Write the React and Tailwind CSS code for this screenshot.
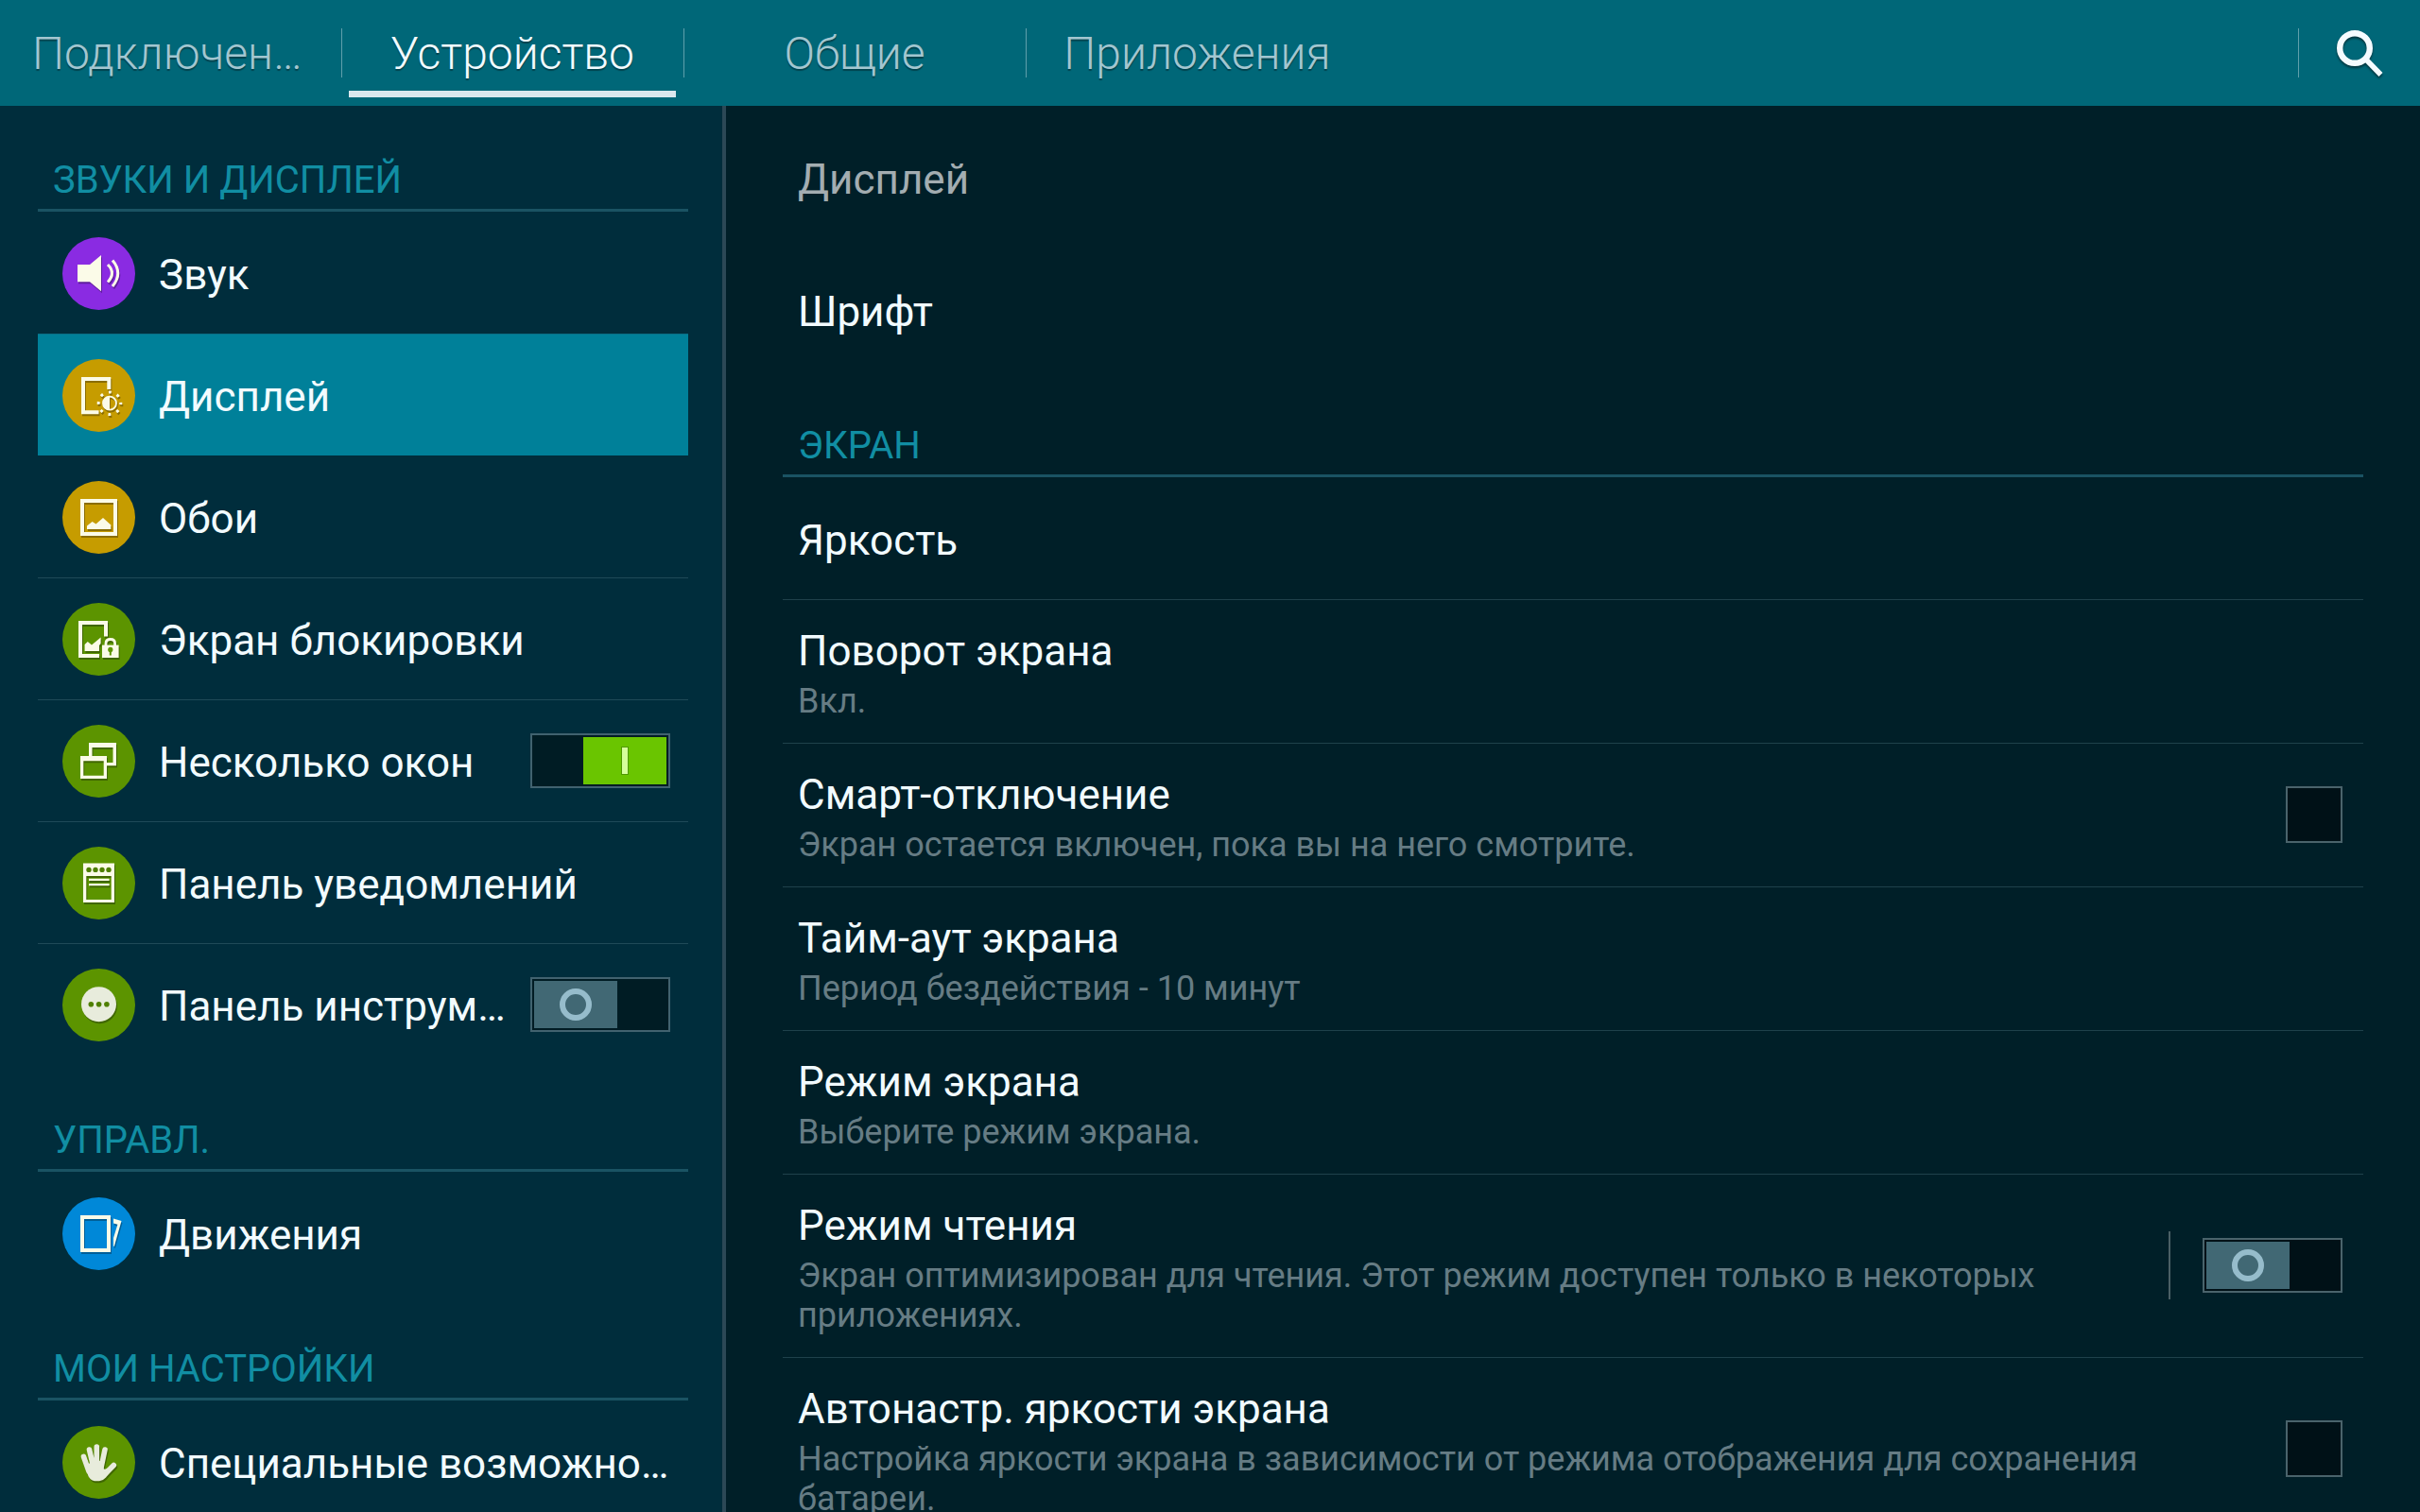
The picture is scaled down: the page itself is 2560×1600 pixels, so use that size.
import React, { useState } from 'react';

const ICONS = {
    sound: {
        color: '#8a2be2',
        glyph: (
            <>
                <path d="M16 29H29L41 19V57.3L29 47.3H16Z" fill="currentColor" />
                <path d="M48 29Q57 38 48 47.5" fill="none" stroke="currentColor" strokeWidth="3" />
                <path d="M53 24.5Q64.5 38 53 52" fill="none" stroke="currentColor" strokeWidth="3" />
            </>
        ),
    },
    display: {
        color: '#c69c00',
        glyph: (
            <>
                <path d="M49.3 32V21H22V56.3H38.5" fill="none" stroke="currentColor" strokeWidth="4" />
                <circle cx="50" cy="46.7" r="7" fill="none" stroke="currentColor" strokeWidth="1.8" />
                <path d="M50 39.7A7 7 0 0 0 50 53.7Z" fill="currentColor" />
                <circle cx="50" cy="46.7" r="11.8" fill="none" stroke="currentColor" strokeWidth="3" strokeDasharray="2.9 6.37" strokeDashoffset="1.45" />
            </>
        ),
    },
    wallpaper: {
        color: '#c69c00',
        glyph: (
            <>
                <rect x="21" y="21" width="35" height="35" fill="none" stroke="currentColor" strokeWidth="4" />
                <path d="M26 51V47.6L31.6 43L35.5 45.6L43 39L51.3 46.6V51Z" fill="currentColor" />
            </>
        ),
    },
    lock: {
        color: '#5c9400',
        glyph: (
            <>
                <path d="M46 35.5V21H19V56H39" fill="none" stroke="currentColor" strokeWidth="4" />
                <path d="M23.6 51V44L26.8 41L31 44.5L40.6 36.6V43L39 45V51Z" fill="currentColor" />
                <path d="M46 45V43Q46 38.5 50.8 38.5Q55.6 38.5 55.6 43V45" fill="none" stroke="currentColor" strokeWidth="2.8" />
                <path d="M42 44.6H59.6V58H42Z" fill="currentColor" />
                <circle cx="50.8" cy="49.4" r="2.6" fill="#5c9400" />
                <path d="M50.8 50V55.5" stroke="#5c9400" strokeWidth="2" />
            </>
        ),
    },
    windows: {
        color: '#5c9400',
        glyph: (
            <>
                <path d="M28 19H57V43.3H47V40H53.5V24H31.5V33H28Z" fill="currentColor" />
                <path fillRule="evenodd" d="M19 33H47V57H19ZM22.3 38.3V53.7H43.7V38.3Z" fill="currentColor" />
            </>
        ),
    },
    notifications: {
        color: '#5c9400',
        glyph: (
            <>
                <path fillRule="evenodd" d="M22 17.6H55V59H22ZM25.3 31V56H51.7V31Z" fill="currentColor" />
                <path d="M28 34.8H49.6M28 40.2H49.6" stroke="currentColor" strokeWidth="2.2" />
                {[28, 35, 42, 49].map(x => <circle key={x} cx={x} cy="24.4" r="2.7" fill="#4f7f00" />)}
            </>
        ),
    },
    toolbar: {
        color: '#5c9400',
        glyph: (
            <>
                <circle cx="38.5" cy="37.7" r="18.5" fill="#e8ecdc" />
                {[30.3, 38.6, 46.9].map(x => <circle key={x} cx={x} cy="37.8" r="2.8" fill="#4f7f00" />)}
            </>
        ),
    },
    motion: {
        color: '#0088d8',
        glyph: (
            <>
                <rect x="21" y="21" width="28" height="35" fill="none" stroke="currentColor" strokeWidth="4" />
                <path d="M54 22.6L62.5 25L55 51.5L54 52V43L58.4 28.8L54 27.5Z" fill="currentColor" />
            </>
        ),
    },
    hand: {
        color: '#5c9400',
        glyph: (
            <g color="#e8ecdc">
                <path d="M22.5 32.5L28 48M28.5 25L33 44M36.3 22V44M45 25L41 44M54.3 41.5L46 50" fill="none" stroke="currentColor" strokeWidth="5.6" strokeLinecap="round" />
                <path d="M25 43L31 37H43.6V45Q44.5 47 49 44L51 48L46 54.5Q43 58 39 58.3H34Q29 57.5 27 52Z" fill="currentColor" />
            </g>
        ),
    },
};

const SECTIONS = [
    {
        title: 'ЗВУКИ И ДИСПЛЕЙ',
        items: [
            { id: 'sound', label: 'Звук' },
            { id: 'display', label: 'Дисплей' },
            { id: 'wallpaper', label: 'Обои' },
            { id: 'lock', label: 'Экран блокировки' },
            { id: 'windows', label: 'Несколько окон', toggle: true, on: true },
            { id: 'notifications', label: 'Панель уведомлений' },
            { id: 'toolbar', label: 'Панель инструментов', toggle: true, on: false },
        ],
    },
    { title: 'УПРАВЛ.', items: [{ id: 'motion', label: 'Движения' }] },
    { title: 'МОИ НАСТРОЙКИ', items: [{ id: 'hand', label: 'Специальные возможности' }] },
];

const TABS = ['Подключения', 'Устройство', 'Общие', 'Приложения'];

const SETTINGS = [
    { title: 'Яркость' },
    { title: 'Поворот экрана', desc: 'Вкл.' },
    { title: 'Смарт-отключение', desc: 'Экран остается включен, пока вы на него смотрите.', control: 'checkbox' },
    { title: 'Тайм-аут экрана', desc: 'Период бездействия - 10 минут' },
    { title: 'Режим экрана', desc: 'Выберите режим экрана.' },
    { title: 'Режим чтения', desc: 'Экран оптимизирован для чтения. Этот режим доступен только в некоторых приложениях.', control: 'switch' },
    { title: 'Автонастр. яркости экрана', desc: 'Настройка яркости экрана в зависимости от режима отображения для сохранения батареи.', control: 'checkbox' },
];

const ItemIcon = ({ id }) => (
    <svg viewBox="0 0 77 77" className="size-[77px] shrink-0 text-[#fbfbe8]" aria-hidden="true">
        <circle cx="38.5" cy="38.5" r="38.5" fill={ICONS[id].color} />
        <g className="drop-shadow-[1px_2px_0_rgba(0,0,0,0.3)]">{ICONS[id].glyph}</g>
    </svg>
);

const Switch = ({ label, defaultOn, dark }) => {
    const [on, setOn] = useState(defaultOn);

    return (
        <label className={`flex h-[58px] w-[148px] shrink-0 cursor-pointer border-2 p-[2px] ${dark ? 'border-[#4a636b] bg-[#001117]' : 'border-[#41626f] bg-[#001c24]'} ${on ? 'justify-end' : 'justify-start'}`}>
            <input type="checkbox" role="switch" className="sr-only" aria-label={label} checked={on} onChange={e => setOn(e.target.checked)} />
            {on ? (
                <span className="flex h-full w-[88px] items-center justify-center bg-[#6ac500]">
                    <span className="h-[30px] w-2 border border-[#4f9a00] bg-[#d6ff9c]" />
                </span>
            ) : (
                <span className="flex h-full w-[88px] items-center justify-center bg-[#416874]">
                    <span className="size-[34px] rounded-full border-6 border-[#96bccb]" />
                </span>
            )}
        </label>
    );
};

const SectionHeader = ({ children }) => (
    <h2 className="flex h-28 items-end border-b-3 border-[#1a5363] px-4 pb-1.5 text-[40px] leading-[48px] text-[#118ea3]">{children}</h2>
);

const Sidebar = ({ selected, onSelect }) => (
    <nav className="flex w-3/10 shrink-0 flex-col gap-px overflow-hidden border-r-4 border-[#2c4856] bg-[#002d3c] pr-9 pl-10">
        {SECTIONS.map(section => (
            <section key={section.title}>
                <SectionHeader>{section.title}</SectionHeader>
                <ul>
                    {section.items.map((item, i) => {
                        const active = item.id === selected;
                        const plain = i === 0 || section.items[i - 1].id === selected;
                        return (
                            <li
                                key={item.id}
                                className={`flex h-[129px] items-center gap-4 border-t pr-[19px] ${active ? 'border-[#0a6f85] bg-[#008099]' : plain ? 'border-transparent' : 'border-[#1f4a58]'}`}
                            >
                                <button type="button" onClick={() => onSelect(item.id)} className="flex h-full min-w-0 flex-1 items-center gap-[25px] pl-[26px] text-left">
                                    <ItemIcon id={item.id} />
                                    <span className="truncate pt-1 text-[44px] leading-[60px] text-[#f2fbff]">{item.label}</span>
                                </button>
                                {item.toggle && <Switch label={item.label} defaultOn={item.on} />}
                            </li>
                        );
                    })}
                </ul>
            </section>
        ))}
    </nav>
);

const SettingRow = ({ id, title, desc, control }) => (
    <li className="flex min-h-[130px] items-center border-b border-[#1f414b] pr-[22px] pl-4">
        <label htmlFor={control === 'checkbox' ? id : undefined} className={`min-w-0 flex-1 ${desc ? 'pt-6 pb-[23px]' : 'pt-1'}`}>
            <span className="block text-[44px] leading-[60px] text-[#f2fbff]">{title}</span>
            {desc && <span className="mt-[2px] block text-[36px] leading-[42px] text-[#667c84]">{desc}</span>}
        </label>
        {control === 'checkbox' && (
            <input id={id} type="checkbox" className="mb-[2px] ml-4 size-15 shrink-0 appearance-none border-2 border-[#4a636b] bg-[#001117] checked:bg-[#6ac500]" />
        )}
        {control === 'switch' && (
            <div className="mb-[2px] ml-4 flex items-center gap-[34px]">
                <div className="h-18 w-[2px] bg-[#4a5f65]" />
                <Switch label={title} defaultOn={false} dark />
            </div>
        )}
    </li>
);

const App = () => {
    const [tab, setTab] = useState('Устройство');
    const [selected, setSelected] = useState('display');

    return (
        <div className="flex h-screen flex-col overflow-hidden bg-[#001f28] font-['Roboto','Noto_Sans',sans-serif]">
            <header className="flex h-28 shrink-0 items-stretch bg-[#006778]">
                {TABS.map((name, i) => (
                    <div key={name} className="flex w-[362px] items-center">
                        <button
                            type="button"
                            onClick={() => setTab(name)}
                            className={`mr-2 ml-[7px] h-[103px] min-w-0 flex-1 self-start truncate border-b-7 px-[27px] pt-[18px] text-[48px] leading-[60px] font-light text-shadow-[0_2px_1px_rgba(0,0,0,0.35)] ${name === tab ? 'border-[#dbe8ee] text-[#f2fbff]' : 'border-transparent text-[#a3c6d0]'}`}
                        >
                            {name}
                        </button>
                        {i < TABS.length - 1 && <div className="h-13 w-px bg-[#5f9fab]" />}
                    </div>
                ))}
                <div className="ml-auto flex items-center">
                    <div className="h-13 w-px bg-[#5f9fab]" />
                    <button type="button" aria-label="Поиск" className="flex h-full w-32 items-center justify-center">
                        <svg viewBox="0 0 50 50" className="size-[50px] text-[#f5fbff] drop-shadow-[0_2px_1px_rgba(0,0,0,0.5)]" fill="none" stroke="currentColor" aria-hidden="true">
                            <circle cx="20" cy="20" r="15.8" strokeWidth="6.4" />
                            <path d="M31 31L47.5 48" strokeWidth="5.6" />
                        </svg>
                    </button>
                </div>
            </header>

            <div className="flex min-h-0 flex-1">
                <Sidebar selected={selected} onSelect={setSelected} />
                <main className="min-w-0 flex-1 overflow-hidden px-15">
                    <h1 className="flex h-[151px] items-center px-4 pt-1 text-[44px] leading-[60px] text-[#a3adb1]">Дисплей</h1>
                    <button type="button" className="flex h-[130px] w-full items-center px-4 pt-1 text-left text-[44px] leading-[60px] text-[#f2fbff]">Шрифт</button>
                    <SectionHeader>ЭКРАН</SectionHeader>
                    <ul>
                        {SETTINGS.map((s, i) => <SettingRow key={s.title} id={`setting-${i}`} {...s} />)}
                    </ul>
                </main>
            </div>
        </div>
    );
};

export default App;
